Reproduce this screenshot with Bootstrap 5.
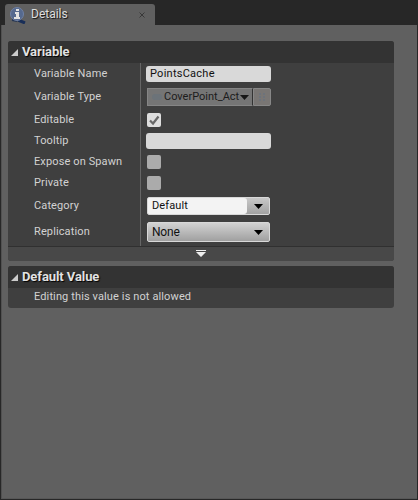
<!DOCTYPE html>
<html lang="en">
<head>
<meta charset="utf-8">
<title>Details</title>
<link href="https://cdn.jsdelivr.net/npm/bootstrap@5.3.0/dist/css/bootstrap.min.css" rel="stylesheet">
<style>
body{width:418px;height:500px;background:#272727;font:11px/14px Roboto,"Liberation Sans",sans-serif;letter-spacing:.12px;color:#d2d2d2;overflow:hidden}
.tabbar{height:25px;padding:4px 0 0 5px}
.doc-tab{width:150px;height:21px;background:#606060;border-radius:3px 3px 0 0;padding:0 9px 0 4px}
.tab-title{font-size:12px;letter-spacing:0;text-shadow:1px 1px 1px #111;color:#ddd;margin:-2px 0 0 4px}
.panel{margin:0 1px 1px;height:474px;background:#606060;padding:16px 23px 0 6px;border-left:1px solid #515151;border-bottom:1px solid #575757}
.section{background:#3f3f3f;border-radius:3px;overflow:hidden}
.section+.section{margin-top:5px}
.section-head{height:22px;background:#333;font-size:13px;font-weight:700;letter-spacing:-.08px;color:#e2e2e2;text-shadow:1px 1px 1px #000;padding-left:3px}
.section-head span{margin-left:4px}
.names{width:132px;padding-left:26px}
.values{border-left:1px solid #666;padding-left:5px;height:183px}
.h-a{height:22px}.h-b{height:24px}.h-c{height:21px}.h-d{height:20px}.h-e{height:28px}
.names>div{padding-bottom:1px}
.names>.h-c{padding-bottom:0}
.field{width:125px;height:16px;background:#d9d9d9;border-radius:3px;color:#111;padding:0 4px;line-height:15px;letter-spacing:.25px}
.pick{width:106px;height:18px;background:#757575;border:1px solid #858585;border-right-color:#333;color:#1c1c1c;margin-left:1px;padding-left:1px}
.pick-text{width:76px;overflow:hidden;white-space:nowrap;letter-spacing:0}
.arr{width:18px;height:18px;background:#797674;border:1px solid #878787;border-radius:0 2px 2px 0}
.tick{width:14px;height:14px;margin-left:1px;border-radius:2px;background:#ababab}
.tick.on{background:#dedede}
.combo{width:123px;height:18px;margin-left:1px;border-radius:2px;color:#111;background:linear-gradient(#c8c8c8,#a2a2a2);border:1px solid #d8d8d8}
.combo-edit{width:99px;height:16px;background:#f3f3f3;border-radius:1px 3px 3px 1px;padding-left:4px;line-height:15px}
.combo-edit+svg{margin-left:7px}
.combo.tall{height:20px;background:linear-gradient(#d2d2d2,#a0a0a0);font-size:12px;letter-spacing:-.2px;padding:0 6px 0 4px}
.foot{height:15px;background:#484848;border-top:1px solid #303030}
.note{height:20px;padding:2px 0 0 26px}
svg{display:block;flex:none}
</style>
</head>
<body>
<div class="tabbar">
  <div class="doc-tab d-flex align-items-center">
    <svg width="18" height="18" viewBox="0 0 18 18"><path d="M9 14l7 3" stroke="#182e58" stroke-width="3"/><path d="M3 14l5 1" stroke="#263653" stroke-width="2"/><circle cx="8" cy="8" r="6.500" fill="#55698e" stroke="#6f81a5"/><path d="M7 3h3v2H7zM6 6h4v5h1v2H5v-2h2V8H6z" fill="#e2e2e2"/></svg>
    <span class="tab-title">Details</span>
    <svg class="ms-auto" width="8" height="8" viewBox="0 0 8 8"><path d="M1.500 1.500l5 5M6.500 1.500l-5 5" stroke="#383838" stroke-width="1"/></svg>
  </div>
</div>
<main class="panel">
  <section class="section">
    <div class="section-head d-flex align-items-center"><svg width="7" height="7"><path d="M7 0v7H0z" fill="#ccc"/></svg><span>Variable</span></div>
    <div class="d-flex">
      <div class="names">
        <div class="h-a d-flex align-items-center">Variable Name</div>
        <div class="h-b d-flex align-items-center">Variable Type</div>
        <div class="h-c d-flex align-items-center">Editable</div>
        <div class="h-a d-flex align-items-center">Tooltip</div>
        <div class="h-d d-flex align-items-center">Expose on Spawn</div>
        <div class="h-a d-flex align-items-center">Private</div>
        <div class="h-b d-flex align-items-center">Category</div>
        <div class="h-e d-flex align-items-center">Replication</div>
      </div>
      <div class="values">
        <div class="h-a d-flex align-items-center"><div class="field">PointsCache</div></div>
        <div class="h-b d-flex align-items-center">
          <div class="pick d-flex align-items-center">
            <svg width="15" height="12"><rect x="3" y="3" width="10" height="6" rx="3" fill="#6c7379"/></svg>
            <div class="pick-text">CoverPoint_Act</div>
            <svg width="9" height="5"><path d="M0 0h9L4.500 5z" fill="#171717"/></svg>
          </div>
          <div class="arr d-flex align-items-center justify-content-center"><svg width="10" height="10"><path d="M2 1h2v2H2zM6 1h2v2H6zM2 4h2v2H2zM6 4h2v2H6zM2 7h2v2H2zM6 7h2v2H6z" fill="#6d737b"/></svg></div>
        </div>
        <div class="h-c d-flex align-items-center"><div class="tick on"><svg width="14" height="14"><path d="M3 7.500l3 3 5.500-7" fill="none" stroke="#686868" stroke-width="2.200"/></svg></div></div>
        <div class="h-a d-flex align-items-center"><div class="field"></div></div>
        <div class="h-d d-flex align-items-center"><div class="tick"></div></div>
        <div class="h-a d-flex align-items-center"><div class="tick"></div></div>
        <div class="h-b d-flex align-items-center">
          <div class="combo d-flex align-items-center"><div class="combo-edit">Default</div><svg width="9" height="5"><path d="M0 0h9L4.500 5z"/></svg></div>
        </div>
        <div class="h-e d-flex align-items-center">
          <div class="combo tall d-flex align-items-center justify-content-between"><span>None</span><svg width="9" height="5"><path d="M0 0h9L4.500 5z"/></svg></div>
        </div>
      </div>
    </div>
    <div class="foot d-flex align-items-center justify-content-center"><svg width="10" height="8"><path d="M0 0h10v1H0zM0 2h10L5 7z" fill="#eee"/></svg></div>
  </section>
  <section class="section">
    <div class="section-head d-flex align-items-center"><svg width="7" height="7"><path d="M7 0v7H0z" fill="#ccc"/></svg><span>Default Value</span></div>
    <div class="note">Editing this value is not allowed</div>
  </section>
</main>
<script src="https://cdn.jsdelivr.net/npm/bootstrap@5.3.0/dist/js/bootstrap.bundle.min.js"></script>
</body>
</html>
